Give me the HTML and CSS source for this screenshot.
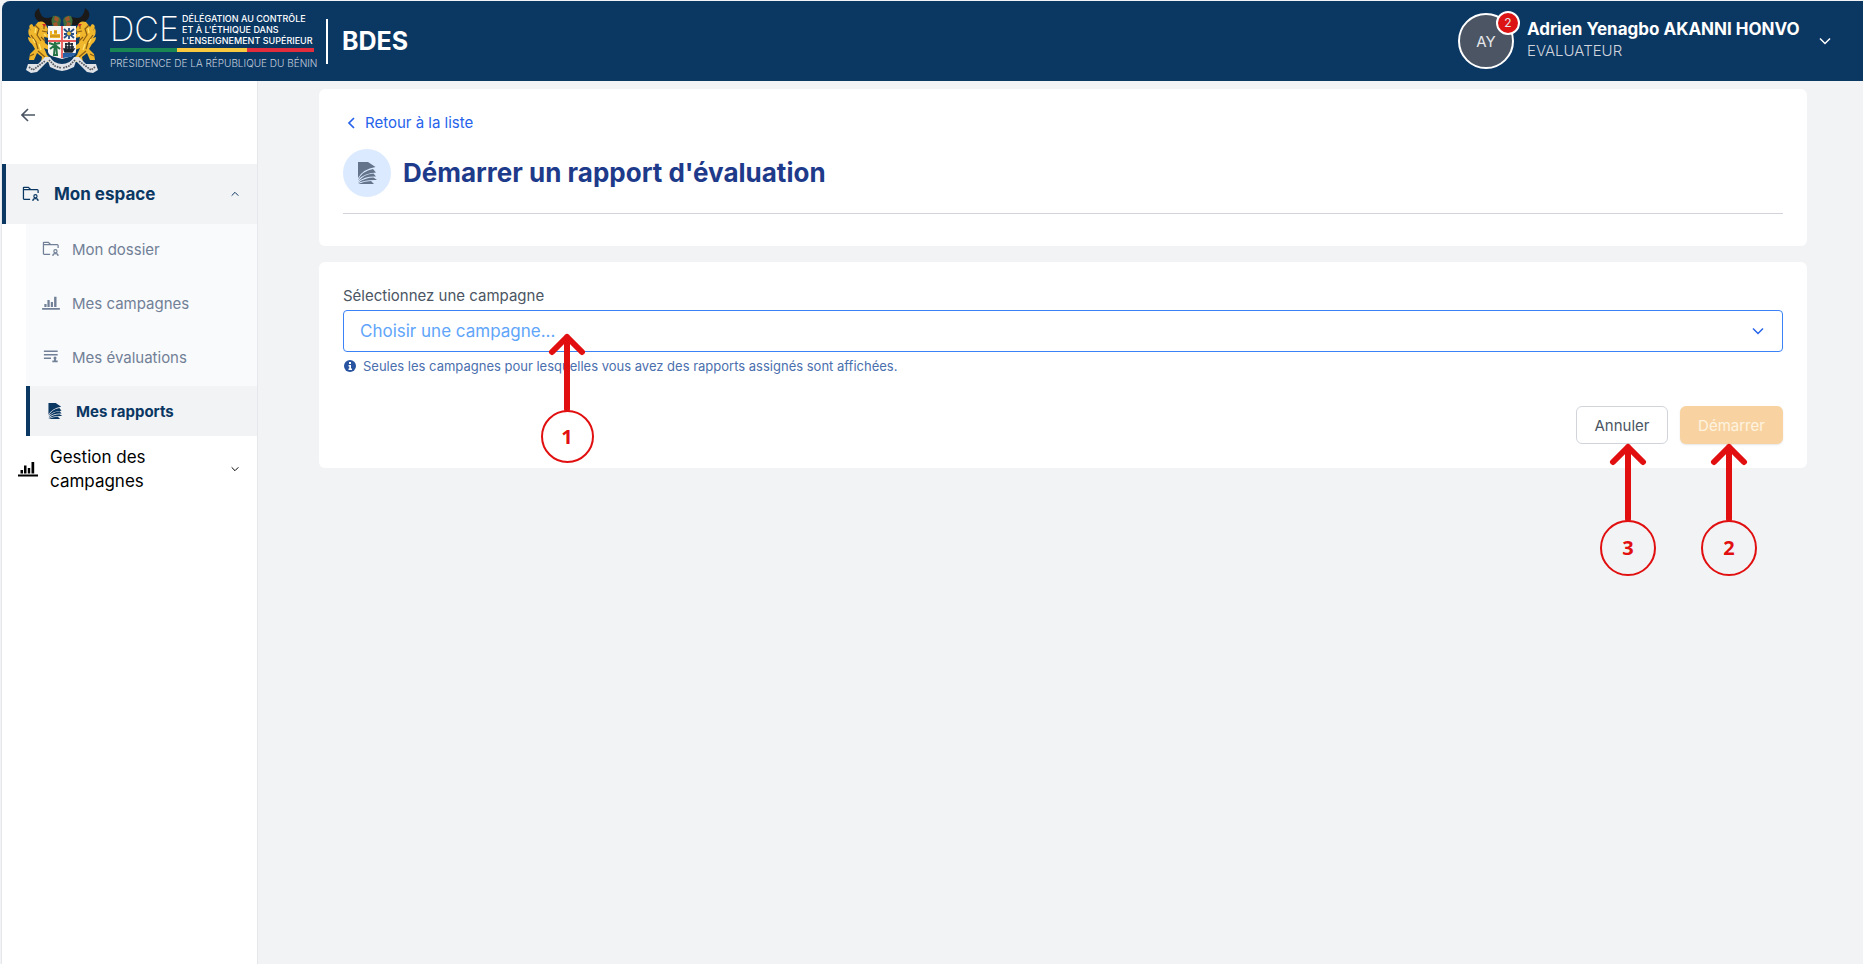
FILE: index.html
```html
<!DOCTYPE html>
<html lang="fr">
<head>
  <meta charset="UTF-8">
  <meta name="viewport" content="width=device-width, initial-scale=1.0">
  <title>BDES - Démarrer un rapport d'évaluation</title>
  <link rel="stylesheet" href="styles.css">
</head>
<body>
  <!-- Shared icons -->
  <svg class="sprite" aria-hidden="true">
    <symbol id="icon-folder" viewBox="0 0 20 18">
      <path d="M9 15H2.500Q1.500 15 1.500 14V2Q1.500 1.500 2 1.500H7L9.500 4H17Q18 4 18 5V8M1.500 4H9" fill="none" stroke="currentColor" stroke-width="1.400"/>
      <circle cx="15" cy="11.500" r="1.800" fill="none" stroke="currentColor" stroke-width="1.300"/>
      <path d="M12.200 17V16Q12.200 14.300 15 14.300T17.800 16V17" fill="none" stroke="currentColor" stroke-width="1.400"/>
    </symbol>
    <symbol id="icon-chart" viewBox="0 0 20 18">
      <path d="M0 14.500H20V16.500H0ZM2.500 10H5V13.500H2.500ZM6 5.500H8.500V13.500H6ZM9.800 8H12.200V13.500H9.800ZM13.500 2H16.200V13.500H13.500Z" fill="currentColor"/>
    </symbol>
    <symbol id="icon-list" viewBox="0 0 20 18">
      <path d="M2 2.500H17.500M2 6.500H17.500M2 10.500H10" fill="none" stroke="currentColor" stroke-width="1.600"/>
      <circle cx="14.500" cy="10" r="1.700" fill="currentColor"/>
      <path d="M13.500 11H15.500V13H17.500V15H11.500V13H13.500Z" fill="currentColor"/>
    </symbol>
    <symbol id="icon-report" viewBox="0 0 20 22">
      <path d="M1 0H11L18.500 5Q6 7 1 16Z" fill="currentColor"/>
      <path d="M1 18Q5 9 16 7L19 10.500Q7 11 1 18Z" fill="currentColor"/>
      <path d="M1 19.800Q7 12 16.500 11.500L19 14.500Q8 14 1 19.800Z" fill="currentColor"/>
      <path d="M1 21Q8 15.500 16.500 15.500L20 18Q9 17.500 1 21Z" fill="currentColor"/>
      <path d="M1 22Q8 19 14 19L17 22Z" fill="currentColor"/>
    </symbol>
    <symbol id="icon-down" viewBox="0 0 12 8">
      <path d="M1 1.500L6 6.500L11 1.500" fill="none" stroke="currentColor" stroke-width="1.500"/>
    </symbol>
    <symbol id="icon-up" viewBox="0 0 12 8">
      <path d="M1 6.500L6 1.500L11 6.500" fill="none" stroke="currentColor" stroke-width="1.500"/>
    </symbol>
    <symbol id="icon-arrow" viewBox="0 0 38 80">
      <path d="M19 4V76M4 19L19 4L34 19" fill="none" stroke="currentColor" stroke-width="6" stroke-linecap="round" stroke-linejoin="round"/>
    </symbol>
  </svg>

  <header class="topbar">
    <div class="brand">
      <svg class="crest" viewBox="0 0 72 66" role="img" aria-label="Armoiries du Bénin">
        <defs>
          <g id="crest-half">
            <!-- horn -->
            <path d="M13 0Q6 5 10 11Q16 18 26 17L29 8Q19 12 16 8Q13 4 13 0Z" fill="#1c1919"/>
            <path d="M27 8Q33 7 35 12L34 18H27Q24 13 27 8Z" fill="#3f6d3c"/>
            <path d="M29 8L33 10L32 14L28 12ZM27 15L31 14L32 18H28Z" fill="#a4572c"/>
            <!-- lion -->
            <path d="M12 14Q18 12 20 17L22 21L21 26H23V30L18 29L19 35L23 38V42L18 40L21 47L24 50V54H15L16 49L11 45L8 52H3L4 46L9 41L6 36Q2 33 2 29L5 30Q1 26 3 20L5 23Q1 17 6 16L8 19Z" fill="#f0b62c"/>
            <path d="M9 17L13 21L11 27L15 33M5 27L10 34L12 41M16 23L21 24M15 29L19 33M12 43L19 49M4 48L8 46M18 17V21" fill="none" stroke="#8a5c13" stroke-width="1.200"/>
            <path d="M10 20L9 25M7 31L9 35M13 36L15 42M20 28L18 26" fill="none" stroke="#ffe36b" stroke-width="1.300"/>
            <path d="M16 16L20 16L19 19Z" fill="#d22a2a"/>
            <!-- ribbon end -->
            <path d="M2 56L0 62L5 65L11 64L22 53L24 59L31 62L36 63V56Q28 56 24 49H19L12 56Z" fill="#dfe2e6"/>
            <path d="M3 59L7 62L19 53M23 52L29 58L35 60" fill="none" stroke="#55585e" stroke-width="1.700" stroke-dasharray="1.600 1"/>
          </g>
        </defs>
        <use href="#crest-half"/>
        <use href="#crest-half" transform="translate(72 0) scale(-1 1)"/>
        <path d="M22 18H50V44Q49 48 43 49L36 51L29 49Q23 48 22 44Z" fill="#f7f5f2"/>
        <path d="M24 30V23H26V26H28V22H31V26H34V30Z" fill="#edb426"/>
        <path d="M24 28H34M28 24H31" stroke="#b47b17"/>
        <path d="M38 21L48 30M48 21L38 30M43 20V31M38 26H48" stroke="#264f86" stroke-width="1.800"/>
        <circle cx="43" cy="25.500" r="2" fill="#e7be39"/>
        <path d="M29 36L28 47H31L30 36M29 37L23 35M29 37L24 41M29 36L34 35M29 37L34 41M29 36V33" fill="none" stroke="#247345" stroke-width="2"/>
        <path d="M38 41H48L46 44H39ZM40 35V41M43 33V41M46 35V41M39 36H47M39 39H48" fill="#18202b" stroke="#18202b" stroke-width="1.500"/>
        <path d="M37 45H50Q49 48 43 49L37 50Z" fill="#2860a5"/>
        <path d="M36 18V50M22 33H50" stroke="#e75a5a" stroke-width="1.800"/>
      </svg>
      <div class="dce">
        <div class="dce-top">
          <span class="dce-name">DCE</span>
          <span class="dce-title">DÉLÉGATION AU CONTRÔLE<br>ET À L'ÉTHIQUE DANS<br>L'ENSEIGNEMENT SUPÉRIEUR</span>
        </div>
        <div class="tricolor"></div>
        <div class="dce-sub">PRÉSIDENCE DE LA RÉPUBLIQUE DU BÉNIN</div>
      </div>
      <span class="brand-name">BDES</span>
    </div>
    <button class="user" type="button">
      <span class="avatar">AY<span class="badge">2</span></span>
      <span class="user-info">
        <span class="user-name">Adrien Yenagbo AKANNI HONVO</span>
        <span class="user-role">EVALUATEUR</span>
      </span>
      <svg class="chevron"><use href="#icon-down"/></svg>
    </button>
  </header>

  <div class="layout">
    <nav class="sidebar">
      <button class="collapse-btn" type="button" aria-label="Réduire le menu">
        <svg viewBox="0 0 14 14"><path d="M14 7H1.500M7 1L1 7L7 13" fill="none" stroke="currentColor" stroke-width="1.600"/></svg>
      </button>
      <button class="menu-head" type="button" aria-expanded="true">
        <svg class="menu-icon"><use href="#icon-folder"/></svg>
        <span>Mon espace</span>
        <svg class="menu-chevron"><use href="#icon-up"/></svg>
      </button>
      <div class="submenu">
        <a href="#dossier"><svg class="menu-icon"><use href="#icon-folder"/></svg>Mon dossier</a>
        <a href="#campagnes"><svg class="menu-icon"><use href="#icon-chart"/></svg>Mes campagnes</a>
        <a href="#evaluations"><svg class="menu-icon"><use href="#icon-list"/></svg>Mes évaluations</a>
        <a href="#rapports" class="active"><svg class="menu-icon"><use href="#icon-report"/></svg>Mes rapports</a>
      </div>
      <button class="menu-group" type="button" aria-expanded="false">
        <svg class="menu-icon"><use href="#icon-chart"/></svg>
        <span>Gestion des campagnes</span>
        <svg class="menu-chevron"><use href="#icon-down"/></svg>
      </button>
    </nav>

    <main>
      <section class="card">
        <a class="back-link" href="#liste">
          <svg viewBox="0 0 8 12"><path d="M7 1L2 6L7 11" fill="none" stroke="currentColor" stroke-width="1.700"/></svg>
          Retour à la liste
        </a>
        <div class="page-title">
          <span class="title-icon"><svg><use href="#icon-report"/></svg></span>
          <h1>Démarrer un rapport d'évaluation</h1>
        </div>
      </section>

      <form class="card">
        <label for="campagne">Sélectionnez une campagne</label>
        <div class="select-wrap">
          <select id="campagne" name="campagne">
            <option value="">Choisir une campagne...</option>
          </select>
          <svg class="select-chevron"><use href="#icon-down"/></svg>
          <div class="marker marker-field"><svg><use href="#icon-arrow"/></svg><span>1</span></div>
        </div>
        <p class="hint">
          <svg viewBox="0 0 12 12"><circle cx="6" cy="6" r="6" fill="currentColor"/><path d="M5 2H7V4H5ZM4.500 5H7V8.500H8V10H4.500V8.500H5.300V6.500H4.500Z" fill="#fff"/></svg>
          Seules les campagnes pour lesquelles vous avez des rapports assignés sont affichées.
        </p>
        <div class="actions">
          <div class="action">
            <button class="cancel-btn" type="button">Annuler</button>
            <div class="marker marker-cancel"><svg><use href="#icon-arrow"/></svg><span>3</span></div>
          </div>
          <div class="action">
            <button class="submit-btn" type="submit" disabled>Démarrer</button>
            <div class="marker marker-submit"><svg><use href="#icon-arrow"/></svg><span>2</span></div>
          </div>
        </div>
      </form>
    </main>
  </div>
</body>
</html>
```
FILE: styles.css
```css
/* General styles */
* {
  box-sizing: border-box;
}
body {
  margin: 0;
  padding: 1px 0 0 1px;
  min-height: 100vh;
  display: flex;
  flex-direction: column;
  font-family: Inter, sans-serif;
  font-size: 15px;
  background-color: #f2f3f5;
}
button, select {
  font-family: inherit;
}
button {
  cursor: pointer;
}
a {
  text-decoration: none;
}
.sprite {
  position: absolute;
  width: 0;
  height: 0;
}

/* Top bar */
.topbar {
  height: 80px;
  margin-left: 1px;
  padding: 0 32px 0 24px;
  display: flex;
  align-items: center;
  justify-content: space-between;
  background-color: #0b3763;
  color: white;
  border-top-left-radius: 8px;
}
.brand {
  display: flex;
  align-items: center;
}
.crest {
  width: 72px;
  height: 66px;
  margin-right: 12px;
}
.dce {
  width: 204px;
  margin-right: 12px;
  white-space: nowrap;
}
.dce-top {
  display: flex;
  align-items: center;
  gap: 4px;
}
.dce-name {
  width: 68px;
  font-size: 34px;
  font-weight: 200;
  line-height: 34px;
}
.dce-title {
  font-size: 9px;
  font-weight: 500;
  line-height: 11px;
}
.tricolor {
  height: 4px;
  margin: 2px 0 4px;
  background: linear-gradient(to right, #198754 33%, #f9c940 33% 67%, #e42d3c 67%);
}
.dce-sub {
  font-size: 10px;
  font-weight: 300;
  line-height: 14px;
  color: #c4d0dd;
}
.brand-name {
  padding-left: 14px;
  border-left: 2px solid white;
  font-size: 25px;
  font-weight: 700;
  line-height: 45px;
}
.user {
  display: flex;
  align-items: center;
  padding: 0;
  border: none;
  background: none;
  color: white;
  text-align: left;
}
.avatar {
  position: relative;
  display: flex;
  align-items: center;
  justify-content: center;
  width: 56px;
  height: 56px;
  margin-right: 13px;
  border: 2px solid white;
  border-radius: 50%;
  background-color: #4b5563;
  color: #e5e7eb;
  font-size: 15px;
}
.badge {
  position: absolute;
  top: -4px;
  right: -8px;
  width: 24px;
  height: 24px;
  border: 2px solid white;
  border-radius: 50%;
  background-color: #dc1414;
  font-size: 12px;
  line-height: 20px;
  text-align: center;
}
.user-info {
  display: flex;
  flex-direction: column;
  min-width: 282px;
  padding-bottom: 4px;
}
.user-name {
  font-size: 17px;
  font-weight: 700;
  line-height: 24px;
}
.user-role {
  font-size: 15px;
  font-weight: 300;
  line-height: 20px;
  color: #d1d5db;
}
.chevron {
  width: 12px;
  height: 8px;
  margin-left: 10px;
}

/* Sidebar */
.layout {
  flex: 1;
  display: flex;
}
.sidebar {
  flex: none;
  width: 257px;
  border-left: 1px solid #e5e7eb;
  border-right: 1px solid #e5e7eb;
  background-color: white;
}
.sidebar button {
  border: none;
  background: none;
  text-align: left;
}
.collapse-btn {
  display: block;
  padding: 27px 19px 42px;
  color: #4b5563;
}
.collapse-btn svg {
  display: block;
  width: 14px;
  height: 14px;
}
.menu-icon {
  flex: none;
  width: 18px;
  height: 16px;
}
.menu-chevron {
  flex: none;
  width: 8px;
  height: 6px;
  margin-left: auto;
}
.sidebar .menu-head {
  display: flex;
  align-items: center;
  gap: 14px;
  width: 100%;
  height: 60px;
  padding: 0 18px 0 16px;
  border-left: 4px solid #0b3763;
  background-color: #f2f3f5;
  color: #0b3763;
  font-size: 17px;
  font-weight: 700;
}
.submenu {
  display: flex;
  flex-direction: column;
  gap: 4px;
  margin-left: 24px;
  background-color: #f9fafc;
}
.submenu a {
  display: flex;
  align-items: center;
  gap: 12px;
  height: 50px;
  padding-left: 16px;
  color: #718096;
}
.submenu .active {
  border-left: 4px solid #0b3763;
  background-color: #f2f3f5;
  color: #0b3763;
  font-weight: 700;
}
.menu-group {
  display: flex;
  align-items: center;
  gap: 12px;
  width: 100%;
  padding: 9px 18px 8px 16px;
  color: black;
  font-size: 17px;
  line-height: 24px;
}
.menu-group .menu-icon {
  width: 20px;
  height: 18px;
}
.menu-group span {
  max-width: 130px;
}

/* Content */
main {
  flex: 1;
  padding: 8px 56px 24px 61px;
}
.card {
  margin-bottom: 16px;
  padding: 24px;
  border-radius: 6px;
  background-color: white;
}
.back-link {
  display: flex;
  align-items: center;
  gap: 10px;
  padding-left: 4px;
  color: #2563eb;
  line-height: 20px;
}
.back-link svg {
  width: 8px;
  height: 12px;
}
.page-title {
  display: flex;
  align-items: center;
  gap: 12px;
  margin: 16px 0 8px;
  padding-bottom: 16px;
  border-bottom: 1px solid #d1d5db;
}
.title-icon {
  display: flex;
  align-items: center;
  justify-content: center;
  width: 48px;
  height: 48px;
  border-radius: 50%;
  background-color: #dbeafe;
  color: #64748b;
}
.title-icon svg {
  width: 20px;
  height: 22px;
}
h1 {
  margin: 0;
  color: #1e3a8a;
  font-size: 26px;
  line-height: 32px;
}
label {
  display: block;
  color: #4b5563;
  line-height: 20px;
  margin-bottom: 4px;
}
.select-wrap {
  position: relative;
}
select {
  display: block;
  width: 100%;
  height: 42px;
  padding: 0 16px;
  appearance: none;
  border: 1px solid #3b82f6;
  border-radius: 4px;
  background-color: white;
  color: #60a5fa;
  font-size: 17px;
}
.select-chevron {
  position: absolute;
  top: 17px;
  right: 19px;
  width: 12px;
  height: 8px;
  color: #2563eb;
  pointer-events: none;
}
.hint {
  display: flex;
  align-items: center;
  gap: 7px;
  margin: 6px 0 32px;
  padding-left: 1px;
  color: #4a6fae;
  font-size: 13px;
  line-height: 16px;
}
.hint svg {
  width: 12px;
  height: 12px;
  color: #2753a0;
}
.actions {
  display: flex;
  justify-content: flex-end;
  gap: 12px;
}
.action {
  position: relative;
}
.actions button {
  height: 38px;
  padding: 0 16px;
  border-radius: 6px;
  font-size: 15px;
}
.actions .cancel-btn {
  min-width: 92px;
  border: 1px solid #d1d5db;
  background-color: white;
  color: #4b5563;
}
.actions .submit-btn {
  min-width: 103px;
  border: none;
  background-color: #f8d3a1;
  color: #fff3e0;
  box-shadow: 0 1px 2px rgba(0, 0, 0, 0.1);
}

/* Numbered markers */
.marker {
  position: absolute;
  top: 37px;
  width: 56px;
  display: flex;
  flex-direction: column;
  align-items: center;
  color: #e10f0f;
  font-family: "Open Sans", sans-serif;
  font-size: 20px;
  font-weight: 700;
  pointer-events: none;
}
.marker svg {
  width: 38px;
  height: 80px;
  margin-bottom: -3px;
}
.marker span {
  width: 56px;
  height: 56px;
  border: 2px solid #e10f0f;
  border-radius: 50%;
  line-height: 52px;
  text-align: center;
}
.marker-cancel {
  left: 24px;
}
.marker-submit {
  left: 21px;
}
.marker-field {
  top: 23px;
  left: 196px;
}
.marker-field span {
  width: 53px;
  height: 53px;
  line-height: 49px;
}
```
